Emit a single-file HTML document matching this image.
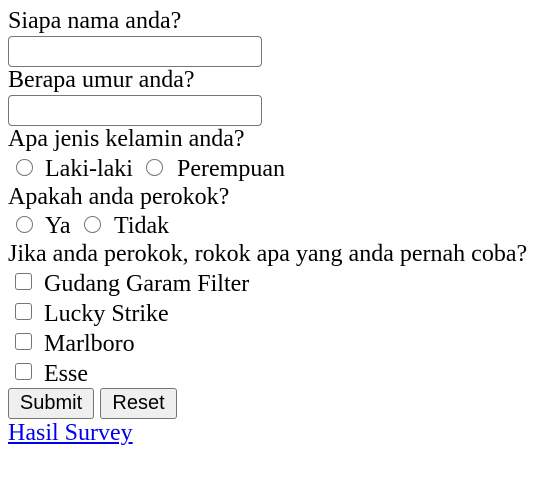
<!DOCTYPE html>
<html><head><style>
body{margin:0;width:557px;height:481px;background:#fff;position:relative;font-family:"Liberation Serif","Times New Roman",serif;font-size:24px;color:#000}
.t{position:absolute;line-height:27px;white-space:nowrap}
.in{position:absolute;left:8px;width:252px;height:29px;border:1px solid #767676;border-radius:4px;box-sizing:content-box}
.r{position:absolute;width:15px;height:15px;border:1.3px solid #767676;border-radius:50%;background:#fff}
.c{position:absolute;width:15px;height:15px;border:1.3px solid #767676;border-radius:3px;background:#fff}
.b{position:absolute;top:387px;height:29px;border:1px solid #767676;border-radius:3px;background:#efefef;font-family:"Liberation Sans",sans-serif;font-size:20px;line-height:29px;text-align:center}
a{color:#0000ee;text-decoration:underline}
</style></head><body>
<div class="t" style="left:8px;top:8px">Siapa nama anda?</div>
<div class="in" style="top:36px"></div>
<div class="t" style="left:8px;top:67px">Berapa umur anda?</div>
<div class="in" style="top:95px"></div>
<div class="t" style="left:8px;top:126px">Apa jenis kelamin anda?</div>
<div class="r" style="left:16px;top:159px"></div>
<div class="t" style="left:45px;top:156px">Laki-laki</div>
<div class="r" style="left:146px;top:159px"></div>
<div class="t" style="left:177px;top:156px">Perempuan</div>
<div class="t" style="left:8px;top:184px">Apakah anda perokok?</div>
<div class="r" style="left:16px;top:216px"></div>
<div class="t" style="left:45px;top:213px">Ya</div>
<div class="r" style="left:84px;top:216px"></div>
<div class="t" style="left:114px;top:213px">Tidak</div>
<div class="t" style="left:8px;top:241px">Jika anda perokok, rokok apa yang anda pernah coba?</div>
<div class="c" style="left:15px;top:273px"></div><div class="t" style="left:44px;top:271px">Gudang Garam Filter</div>
<div class="c" style="left:15px;top:303px"></div><div class="t" style="left:44px;top:301px">Lucky Strike</div>
<div class="c" style="left:15px;top:333px"></div><div class="t" style="left:44px;top:331px">Marlboro</div>
<div class="c" style="left:15px;top:363px"></div><div class="t" style="left:44px;top:361px">Esse</div>
<div class="b" style="left:8px;width:84px;top:388px">Submit</div>
<div class="b" style="left:100px;width:75px;top:388px">Reset</div>
<div class="t" style="left:8px;top:420px"><a>Hasil Survey</a></div>
</body></html>
